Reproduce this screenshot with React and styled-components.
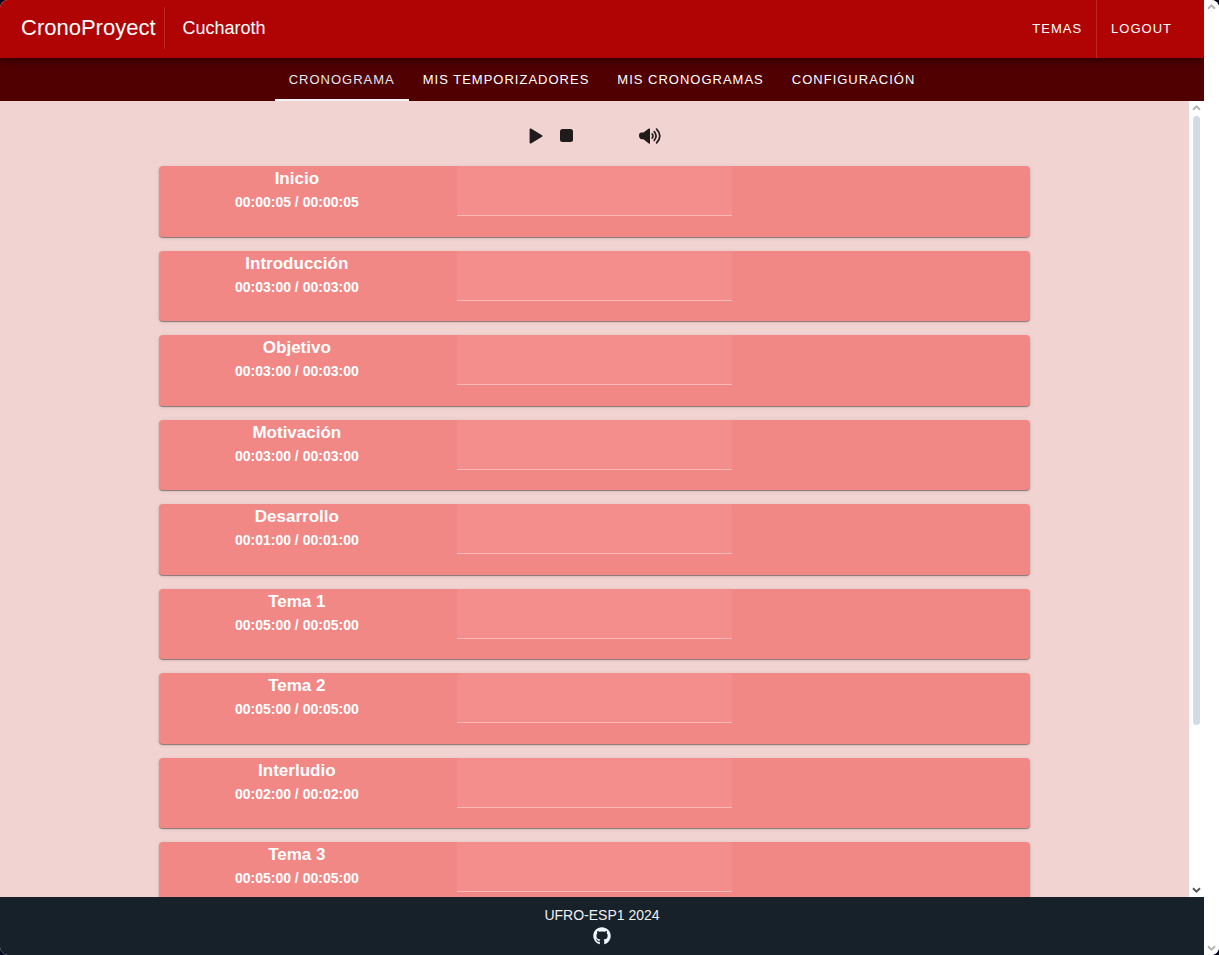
import React from "react";
import styled, { createGlobalStyle } from "styled-components";
import { FaGithub } from "react-icons/fa";

const GlobalStyle = createGlobalStyle`
  *, *::before, *::after { box-sizing: border-box; }
  body {
    margin: 0;
    background: #03051a;
    font-family: "Liberation Sans", Arial, sans-serif;
    color: #ffffff;
  }
`;

const Frame = styled.div`
  display: flex;
  height: 100vh;
  overflow: hidden;
  border-radius: 8px;
  background: #ffffff;
`;

const Page = styled.div`
  flex: 1;
  min-width: 0;
  display: flex;
  flex-direction: column;
  overflow: hidden;
`;

const Header = styled.header`
  position: relative;
  display: flex;
  align-items: center;
  justify-content: space-between;
  height: 58px;
  padding: 0 18px 0 21px;
  background: #b00404;
  box-shadow: 0 2px 8px rgba(0, 0, 0, 0.5);
`;

const Brand = styled.div`
  display: flex;
  align-items: center;
  padding-bottom: 2px;
`;

const Logo = styled.a`
  padding-right: 8px;
  border-right: 1px solid #bf2828;
  font-size: 22px;
  line-height: 42px;
  color: #ffffff;
  text-decoration: none;
`;

const UserName = styled.span`
  padding-left: 18px;
  font-size: 18px;
`;

const HeaderActions = styled.div`
  display: flex;
  align-self: stretch;
`;

const HeaderButton = styled.button`
  padding: 0 14px 2px;
  border: 0;
  border-left: ${({ $divided }) => ($divided ? "1px solid #bf2828" : "0")};
  background: none;
  color: #ffffff;
  font-family: inherit;
  font-size: 13px;
  letter-spacing: 1px;
  text-transform: uppercase;
`;

const Tabs = styled.nav`
  display: flex;
  justify-content: center;
  height: 43px;
  background: #500000;
`;

const Tab = styled.a`
  padding: 0 14px;
  border-bottom: 2px solid ${({ $active }) => ($active ? "#f5f0f5" : "transparent")};
  color: ${({ $active }) => ($active ? "#e6e6f0" : "#ffffff")};
  font-size: 13px;
  line-height: 43px;
  letter-spacing: 1px;
  text-transform: uppercase;
  text-decoration: none;
`;

const Body = styled.div`
  flex: 1;
  min-height: 0;
  display: flex;
`;

const Main = styled.main`
  flex: 1;
  min-width: 0;
  overflow: hidden;
  padding: 20px 16px;
  background: #f1d3d1;
`;

const Controls = styled.div`
  display: flex;
  justify-content: center;
  height: 30px;
  margin-bottom: 15px;
  padding-right: 4px;
`;

const IconButton = styled.button`
  display: flex;
  align-items: center;
  justify-content: center;
  width: 31px;
  padding: 0;
  border: 0;
  background: none;
  color: #1f1b1b;
  margin-left: ${({ $apart }) => ($apart ? "52px" : "0")};
`;

const TimerList = styled.ul`
  display: grid;
  grid-auto-rows: 1fr;
  gap: 14px;
  min-height: 747px;
  max-width: 871px;
  margin: 0 auto;
  padding: 0;
  list-style: none;
`;

const Card = styled.li`
  display: grid;
  grid-template-columns: repeat(3, 1fr);
  column-gap: 22px;
  align-items: start;
  border-radius: 4px;
  background: #f28886;
  box-shadow: 0 1px 1px rgba(0, 0, 0, 0.4), 0 1px 4px rgba(0, 0, 0, 0.1);
`;

const CardText = styled.div`
  text-align: center;
  font-weight: 700;
`;

const CardTitle = styled.label`
  display: block;
  font-size: 17px;
  line-height: 25px;
`;

const CardTime = styled.div`
  font-size: 14px;
  line-height: 22px;
`;

const NoteInput = styled.input`
  width: 100%;
  height: 50px;
  padding: 0 12px;
  border: 0;
  border-bottom: 1px solid #f9b9b8;
  border-radius: 4px 4px 0 0;
  outline: 0;
  background: #f48e8d;
  color: #ffffff;
  font: inherit;
`;

const Footer = styled.footer`
  display: flex;
  flex-direction: column;
  align-items: center;
  height: 58px;
  padding-top: 8px;
  background: #17212a;
  color: #f0f0f0;
  font-size: 14px;
  line-height: 20px;
`;

const FooterLink = styled.a`
  display: flex;
  padding-top: 2px;
  color: #f0f8ff;
`;

const Rail = styled.div`
  display: flex;
  flex-direction: column;
  align-items: center;
  justify-content: space-between;
  width: 15px;
  padding: 3px 0;
  background: #ffffff;
`;

const Thumb = styled.div`
  flex: 0 1 ${({ $length }) => $length};
  width: 7px;
  margin: 4px 0 auto;
  border-radius: 4px;
  background: #d0dbe3;
`;

function Chevron({ down, color }) {
  return (
    <svg width="9" height="8" viewBox="0 0 9 8" fill="none" stroke={color} strokeWidth="2" aria-hidden="true">
      <path d={down ? "M1 2.2L4.5 5.6L8 2.2" : "M1 5.8L4.5 2.4L8 5.8"} />
    </svg>
  );
}

const timers = [
  ["Inicio", "00:00:05"],
  ["Introducción", "00:03:00"],
  ["Objetivo", "00:03:00"],
  ["Motivación", "00:03:00"],
  ["Desarrollo", "00:01:00"],
  ["Tema 1", "00:05:00"],
  ["Tema 2", "00:05:00"],
  ["Interludio", "00:02:00"],
  ["Tema 3", "00:05:00"],
];

const tabs = ["Cronograma", "Mis temporizadores", "Mis cronogramas", "Configuración"];

export default function App() {
  return (
    <>
      <GlobalStyle />
      <Frame>
        <Page>
          <Header>
            <Brand>
              <Logo href="#">CronoProyect</Logo>
              <UserName>Cucharoth</UserName>
            </Brand>
            <HeaderActions>
              <HeaderButton type="button">Temas</HeaderButton>
              <HeaderButton type="button" $divided>Logout</HeaderButton>
            </HeaderActions>
          </Header>
          <Tabs>
            {tabs.map((name, i) => (
              <Tab key={name} href="#" $active={i === 0}>{name}</Tab>
            ))}
          </Tabs>
          <Body>
            <Main>
              <Controls>
                <IconButton type="button" aria-label="Iniciar">
                  <svg width="14" height="16" viewBox="0 0 14 16" fill="currentColor">
                    <path d="M.6 1.6C.6 .6 1.6 .3 2.4.8L13 7.2C13.7 7.6 13.7 8.4 13 8.8L2.4 15.2C1.6 15.7 .6 15.4 .6 14.4Z" />
                  </svg>
                </IconButton>
                <IconButton type="button" aria-label="Detener">
                  <svg width="14" height="14" viewBox="0 0 14 14" fill="currentColor">
                    <rect x="0" y="0" width="13" height="13" rx="2.5" />
                  </svg>
                </IconButton>
                <IconButton type="button" aria-label="Sonido" $apart>
                  <svg width="22" height="16" viewBox="0 0 22 16" fill="currentColor">
                    <path d="M0 7.5Q0 4.8 2.6 4.6H4.5L9.8 .6Q11 0 11 1V15Q11 16 9.8 15.4L4.5 11.2H2.6Q0 10.6 0 7.5Z" />
                    <g fill="none" stroke="currentColor" strokeWidth="1.7" strokeLinecap="round">
                      <path d="M13.2 6Q14.8 8 13.2 10" />
                      <path d="M15.2 3.6Q19 8 15.2 12.4" />
                      <path d="M17.6 1.2Q24 8 17.6 14.8" />
                    </g>
                  </svg>
                </IconButton>
              </Controls>
              <TimerList>
                {timers.map(([name, time], i) => (
                  <Card key={name}>
                    <CardText>
                      <CardTitle htmlFor={`note-${i}`}>{name}</CardTitle>
                      <CardTime>{time} / {time}</CardTime>
                    </CardText>
                    <NoteInput id={`note-${i}`} type="text" />
                  </Card>
                ))}
              </TimerList>
            </Main>
            <Rail aria-hidden="true">
              <Chevron color="#b4b4b4" />
              <Thumb $length="609px" />
              <Chevron down color="#555555" />
            </Rail>
          </Body>
          <Footer>
            <span>UFRO-ESP1 2024</span>
            <FooterLink href="#" aria-label="GitHub">
              <FaGithub size={18} />
            </FooterLink>
          </Footer>
        </Page>
        <Rail aria-hidden="true">
          <Chevron color="#b4b4b4" />
          <Chevron down color="#b4b4b4" />
        </Rail>
      </Frame>
    </>
  );
}
